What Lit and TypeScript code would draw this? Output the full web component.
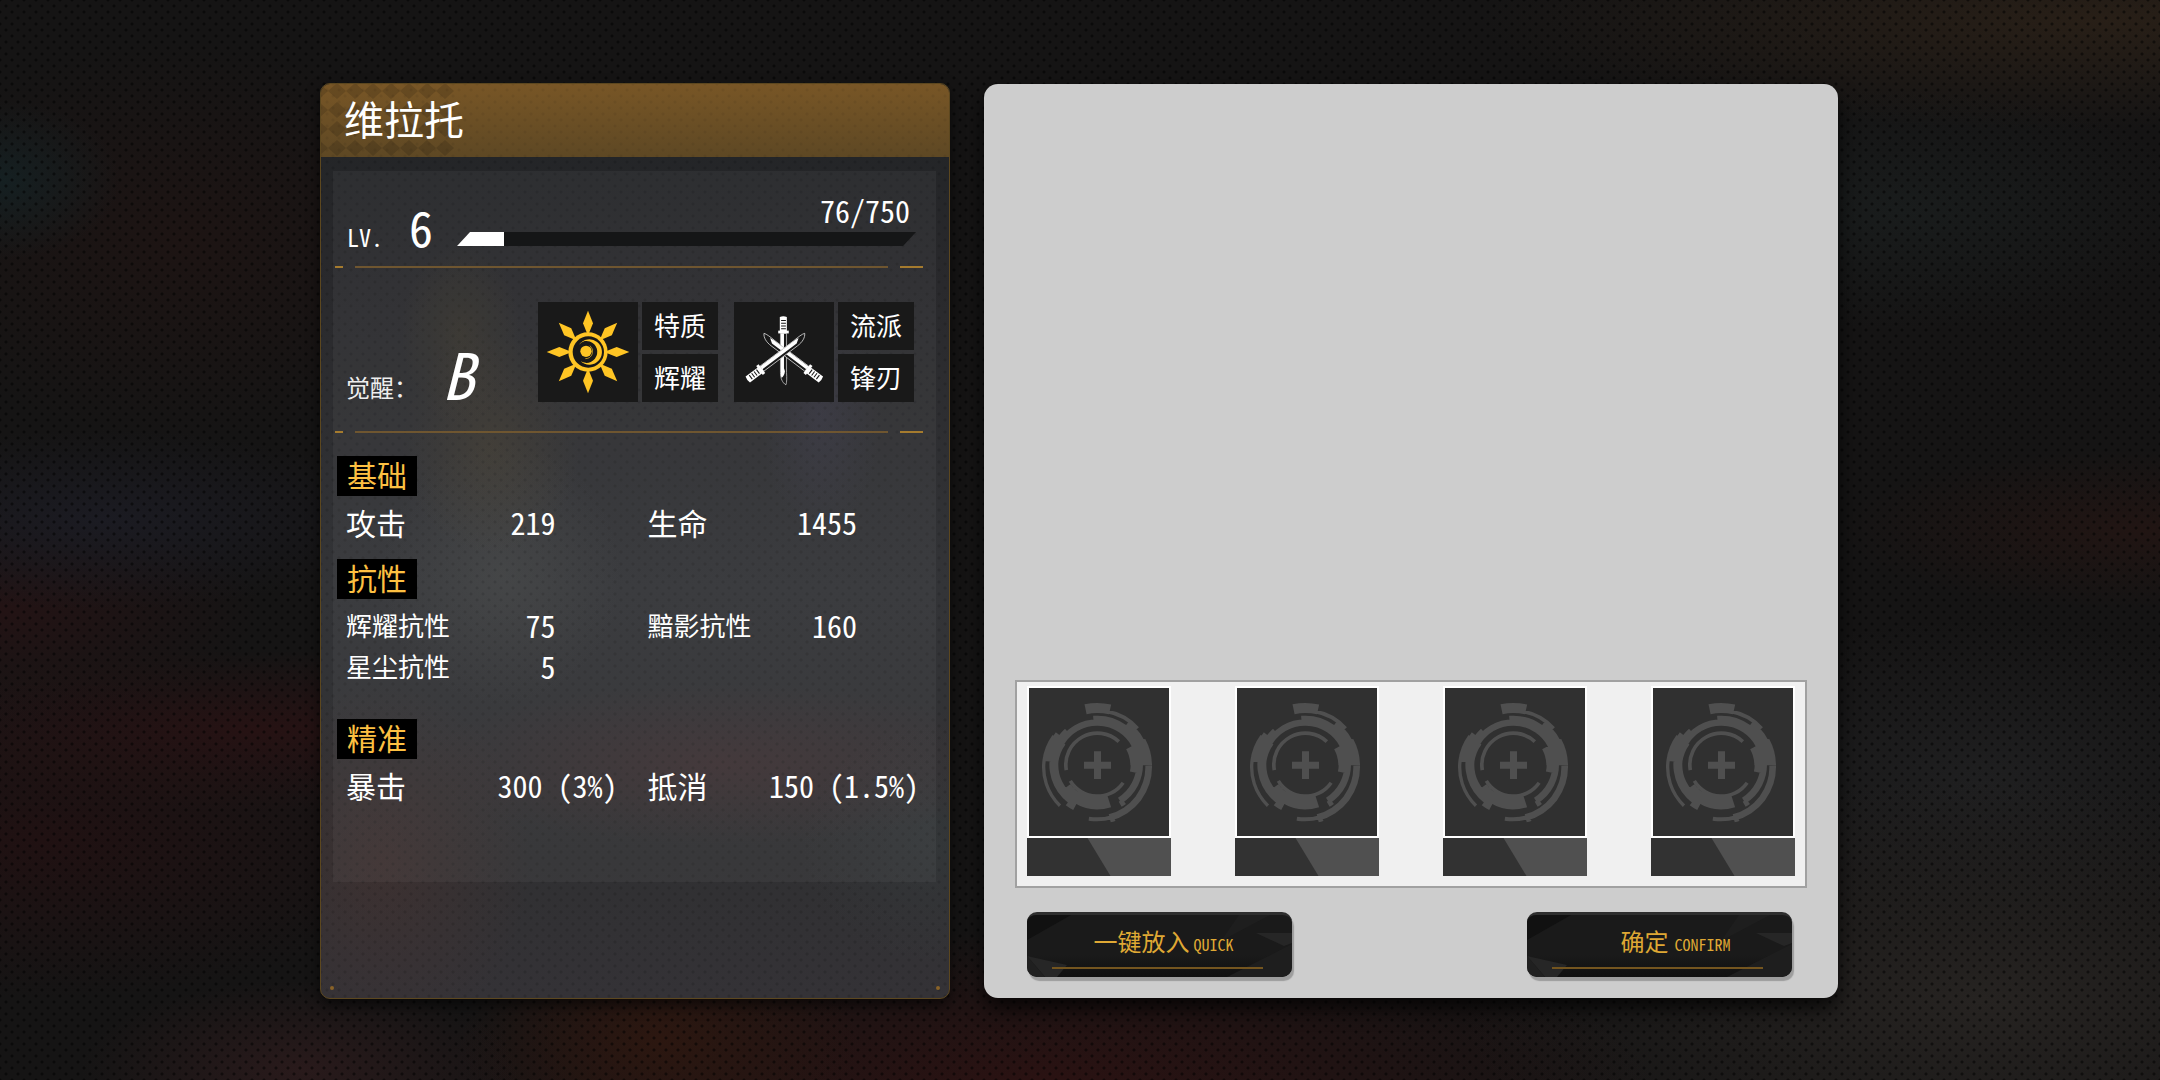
import { LitElement, html, svg, css } from "lit";
import { customElement, property, state } from "lit/decorators.js";

interface Stat {
  label: string;
  value: string;
}

interface StatGroup {
  title: string;
  kind: "base" | "resist" | "precision";
  stats: Stat[];
}

const GROUPS: StatGroup[] = [
  {
    title: "基础",
    kind: "base",
    stats: [
      { label: "攻击", value: "219" },
      { label: "生命", value: "1455" },
    ],
  },
  {
    title: "抗性",
    kind: "resist",
    stats: [
      { label: "辉耀抗性", value: "75" },
      { label: "黯影抗性", value: "160" },
      { label: "星尘抗性", value: "5" },
    ],
  },
  {
    title: "精准",
    kind: "precision",
    stats: [
      { label: "暴击", value: "300 (3%)" },
      { label: "抵消", value: "150 (1.5%)" },
    ],
  },
];

/** Ring segment between two radii; angles run clockwise from twelve o'clock. */
function ring(cx: number, cy: number, r1: number, r2: number, a1: number, a2: number): string {
  const pt = (r: number, a: number) => {
    const t = (a * Math.PI) / 180;
    return `${(cx + r * Math.sin(t)).toFixed(1)} ${(cy - r * Math.cos(t)).toFixed(1)}`;
  };
  const large = a2 - a1 > 180 ? 1 : 0;
  return `M${pt(r2, a1)}A${r2} ${r2} 0 ${large} 1 ${pt(r2, a2)}L${pt(r1, a2)}A${r1} ${r1} 0 ${large} 0 ${pt(r1, a1)}Z`;
}

const EMBLEM = [
  ring(232, 254, 155, 185, -12, 13),
  ring(232, 254, 157, 168, 10, 48),
  ring(232, 254, 117, 147, -5, 36),
  ring(232, 254, 117, 136, -62, 64),
  ring(232, 254, 117, 165, 36, 47),
  ring(232, 254, 117, 159, 46, 64),
  ring(231, 256, 100, 165, 61, 90),
  ring(232, 254, 100, 136, 84, 102),
  ring(232, 254, 117, 137, 86, 148),
  ring(232, 254, 128, 146, 144, 150),
  ring(231, 262, 145, 165, 88, 166),
  ring(231, 262, 154, 170, 161, 166),
  ring(231, 262, 150, 162, 163, 189),
  ring(232, 254, 117, 158, -76, -52),
  ring(232, 254, 117, 145, -54, -42),
  ring(231, 262, 117, 165, -83, -54),
  ring(232, 254, 117, 144, -152, -80),
  ring(231, 262, 155, 165, -136, -80),
  ring(232, 254, 100, 154, -152, -142),
  ring(232, 254, 100, 144, -152, -126),
  ring(232, 254, 99, 134, 162, 212),
  ring(232, 254, 89, 100, 125, 239),
  ring(232, 254, 89, 100, -100, 43),
].join("");

const emblem = html`
  <svg class="emblem" viewBox="27 24 420 444" aria-hidden="true">
    <path fill="#4f4f4f" d=${EMBLEM}></path>
    <path fill="#4f4f4f" d="M192 245h30v-31h21v31h30v21h-30v31h-21v-31h-30z"></path>
  </svg>
`;

const sun = html`
  <svg class="glyph" viewBox="-6 6 300 300" aria-hidden="true">
    <g fill="#ffc524">
      ${[0, 45, 90, 135, 180, 225, 270, 315].map(
        (a) => svg`<path d="M144 32L159 70L146 102H142L129 70Z" transform="rotate(${a} 144 156)"></path>`
      )}
      <circle cx="144" cy="156" r="59"></circle>
    </g>
    <circle cx="145" cy="156" r="47" fill="#191919"></circle>
    <path fill="#ffc524" d="M117 134A38 38 0 1 1 122 184A33 33 0 1 0 134 123A36 36 0 0 0 117 134Z"></path>
    <circle cx="138" cy="154" r="17" fill="#ffc524"></circle>
    <path fill="none" stroke="#ffc524" stroke-width="2" d="M150 137A22 22 0 0 1 136 176"></path>
  </svg>
`;

/** Sword with the grip on top; `face` is the lit side of the blade. */
const sword = (face: string) => svg`
  <path d="M-9 3V158C-9 180 -3 198 8 206C11 196 11 180 10 158V3Z"
    fill="#191919" stroke="#d8d8d8" stroke-width="2.5" stroke-linejoin="round"></path>
  <path d=${face} fill="#fff"></path>
  <path d="M-16 -8H17V3H-16Z" fill="#fff"></path>
  <path d="M-11 -62Q0 -67 11 -62V-6H-11Z" fill="#fff"></path>
  <path d="M-7 -48H8M-7 -37H8M-7 -26H8M-7 -15H8" stroke="#191919" stroke-width="4"></path>
`;

const SPINE_LEFT = "M-8 3H2V140L5 152C4 166 0 172 -5 178C-8 172 -8 166 -8 158Z";
const SPINE_RIGHT = "M-2 3H9V160C9 168 9 174 8 178L-2 160Z";

const swords = html`
  <svg class="glyph" viewBox="-3 6 300 300" aria-hidden="true">
    <g transform="translate(145 98) scale(.96 .76)">${sword(SPINE_LEFT)}</g>
    <g transform="translate(217 208) scale(-1 1) rotate(-127) scale(1 .82)">${sword(SPINE_RIGHT)}</g>
    <g transform="translate(79 208) rotate(-127) scale(1 .82)">${sword(SPINE_RIGHT)}</g>
  </svg>
`;

const base = css`
  *,
  *::before,
  *::after {
    box-sizing: border-box;
  }
  :host {
    font-family: "Noto Sans Mono CJK SC", "Noto Sans CJK SC", sans-serif;
  }
`;

@customElement("command-button")
export class CommandButton extends LitElement {
  @property() label = "";
  @property() caption = "";
  @property({ type: Boolean, reflect: true }) spaced = false;

  static styles = [
    base,
    css`
      :host {
        display: block;
        flex: 0 1 265px;
      }
      .command {
        position: relative;
        display: flex;
        align-items: baseline;
        justify-content: center;
        gap: 4px;
        width: 100%;
        height: 65px;
        padding: 10px 0 0 8px;
        overflow: hidden;
        border: 0;
        border-top: 3px solid #2e2e2e;
        border-radius: 10px;
        background: linear-gradient(#1a1a1a 64%, #101010);
        color: #dfa834;
        font: inherit;
        font-size: 24px;
        line-height: 32px;
        cursor: pointer;
      }
      :host([spaced]) .command {
        gap: 6px;
        padding-left: 32px;
      }
      .shade {
        border-radius: 10px;
        box-shadow: 2px 4px 1px #9d9d9d;
      }
      .facets {
        position: absolute;
        inset: 0;
        width: 100%;
        height: 100%;
      }
      .command::after {
        content: "";
        position: absolute;
        left: 25px;
        right: 29px;
        bottom: 8px;
        height: 2px;
        background: #74551f;
      }
      .text,
      .caption {
        position: relative;
      }
      .caption {
        font-size: 16px;
      }
    `,
  ];

  render() {
    return html`
      <div class="shade">
        <button class="command" type="button">
          <svg class="facets" viewBox="0 0 265 62" preserveAspectRatio="none" aria-hidden="true">
            <path fill="#111" d="M0 0H44L0 25Z"></path>
            <path fill="#1e1e1e" d="M212 0H243L194 26ZM265 29V62H200Z"></path>
            <path fill="#262626" d="M229 18H265V28L257 31ZM0 41L40 50L30 62H18Z"></path>
            <path fill="#202020" d="M0 41L18 62H0Z"></path>
          </svg>
          <span class="text">${this.label}</span>
          <span class="caption">${this.caption}</span>
        </button>
      </div>
    `;
  }
}

@customElement("stat-group")
export class StatGroupView extends LitElement {
  @property({ attribute: false }) group!: StatGroup;

  static styles = [
    base,
    css`
      :host {
        display: block;
      }
      .title {
        display: block;
        width: max-content;
        margin: 0 0 0 4px;
        padding: 0 10px 4px;
        background: #000;
        color: #fdc042;
        font-size: 30px;
        font-weight: 400;
        line-height: 36px;
      }
      .stats {
        display: grid;
        grid-template-columns: 1fr 1fr;
        margin: 8px 0 0;
      }
      .stat {
        display: flex;
        align-items: center;
        justify-content: space-between;
        height: 41px;
        padding: 0 79px 6px 13px;
        white-space: nowrap;
      }
      .precision .stat {
        padding-right: 17px;
      }
      .name,
      .value {
        margin: 0;
        font-size: 30px;
        line-height: 34px;
      }
      .resist .name {
        font-size: 26px;
      }
    `,
  ];

  render() {
    const { title, kind, stats } = this.group;
    return html`
      <section class=${kind}>
        <h2 class="title">${title}</h2>
        <dl class="stats">
          ${stats.map(
            (s) => html`
              <div class="stat">
                <dt class="name">${s.label}</dt>
                <dd class="value">${s.value}</dd>
              </div>
            `
          )}
        </dl>
      </section>
    `;
  }
}

@customElement("app-root")
export class AppRoot extends LitElement {
  @state() private exp = 76;
  @state() private expMax = 750;

  static styles = [
    base,
    css`
      :host {
        display: block;
        color: #fff;
      }
      .page {
        position: relative;
        display: flex;
        justify-content: center;
        min-height: 100vh;
        padding: 83px 34px 81px 32px;
        background:
          radial-gradient(circle, rgba(0, 0, 0, 0.5) 1px, transparent 2px) 0 0 / 12px 12px,
          radial-gradient(circle, rgba(0, 0, 0, 0.5) 1px, transparent 2px) 6px 6px / 12px 12px,
          radial-gradient(ellipse 70px 50px at 1220px 140px, #352117, transparent),
          radial-gradient(ellipse 620px 110px at 2100px 20px, #281f17, transparent),
          radial-gradient(ellipse 120px 80px at 0 180px, #152022, transparent),
          radial-gradient(ellipse 300px 90px at 100px 520px, #1b1b22, transparent),
          radial-gradient(ellipse 260px 110px at 0 610px, #231314, transparent),
          radial-gradient(ellipse 420px 80px at 260px 730px, #261213, transparent),
          radial-gradient(ellipse 400px 160px at 40px 840px, #201112, transparent),
          radial-gradient(ellipse 220px 90px at 300px 1070px, #291a1b, transparent),
          radial-gradient(ellipse 200px 120px at 660px 1040px, #2c1710, transparent),
          radial-gradient(ellipse 620px 150px at 1040px 1080px, #2a1212, transparent),
          radial-gradient(ellipse 520px 220px at 1980px 1000px, #262321, transparent),
          radial-gradient(ellipse 340px 160px at 1980px 780px, #1f1f20, transparent),
          radial-gradient(ellipse 300px 120px at 1900px 210px, #191c1c, transparent),
          radial-gradient(ellipse 300px 80px at 2140px 530px, #211513, transparent),
          radial-gradient(ellipse 300px 200px at 180px 240px, #1d1413, transparent),
          #151414;
      }
      .layout {
        display: grid;
        grid-template-columns: minmax(0, 630fr) minmax(0, 854fr);
        gap: 34px;
        width: 100%;
        max-width: 1518px;
      }

      .profile {
        position: relative;
        display: flex;
        flex-direction: column;
        overflow: hidden;
        border: 1px solid #5c471f;
        border-radius: 10px;
        background:
          radial-gradient(circle, rgba(0, 0, 0, 0.13) 1px, transparent 2px) 0 0 / 12px 12px,
          radial-gradient(circle, rgba(0, 0, 0, 0.13) 1px, transparent 2px) 6px 6px / 12px 12px,
          radial-gradient(ellipse 60px 90px at 140px 250px, rgba(80, 70, 40, 0.28), transparent),
          radial-gradient(ellipse 90px 110px at 170px 360px, rgba(85, 72, 45, 0.3), transparent),
          radial-gradient(ellipse 60px 120px at 500px 330px, rgba(62, 60, 78, 0.4), transparent),
          radial-gradient(ellipse 120px 130px at 180px 490px, rgba(78, 80, 78, 0.36), transparent),
          radial-gradient(ellipse 300px 80px at 400px 680px, rgba(80, 50, 52, 0.36), transparent),
          radial-gradient(ellipse 150px 180px at 60px 780px, rgba(80, 50, 46, 0.38), transparent),
          radial-gradient(ellipse 140px 120px at 620px 760px, rgba(54, 60, 62, 0.5), transparent),
          linear-gradient(#212325, #29292c 22%, #333437 55%, #303032 85%, #343236);
        box-shadow: 0 6px 14px rgba(0, 0, 0, 0.6);
      }
      .head {
        position: relative;
        display: flex;
        align-items: center;
        height: 73px;
        padding: 0 23px 6px;
        background:
          radial-gradient(circle, rgba(0, 0, 0, 0.06) 1px, transparent 2px) 0 0 / 12px 12px,
          radial-gradient(circle, rgba(0, 0, 0, 0.06) 1px, transparent 2px) 6px 6px / 12px 12px,
          linear-gradient(#785626, #5e4824);
      }
      .diamonds {
        position: absolute;
        left: 0;
        top: 0;
        width: 136px;
        height: 100%;
      }
      .hero {
        position: relative;
        margin: 0;
        font-size: 40px;
        font-weight: 400;
        line-height: 56px;
      }
      .sheet {
        display: flex;
        flex-direction: column;
        min-height: 711px;
        margin: 14px 13px 0 12px;
        padding-bottom: 40px;
        background: rgba(255, 255, 255, 0.045);
      }

      .level {
        display: flex;
        align-items: flex-end;
        height: 80px;
        padding: 0 20px 0 14px;
      }
      .lv {
        width: 62px;
        font-size: 24px;
        line-height: 28px;
      }
      .rank {
        width: 48px;
        font-size: 48px;
        line-height: 50px;
      }
      .gauge {
        flex: 1;
        display: flex;
        flex-direction: column;
        padding-bottom: 5px;
      }
      .exp {
        padding-right: 6px;
        font-size: 30px;
        line-height: 44px;
        text-align: right;
      }
      .track {
        height: 14px;
        background: #151617;
        clip-path: polygon(13px 0, 100% 0, calc(100% - 13px) 100%, 0 100%);
      }
      .fill {
        height: 100%;
        background: #fff;
      }

      .rule {
        display: grid;
        grid-template-columns: 8px 1fr 23px;
        gap: 12px;
        height: 2px;
        margin: 0 13px 0 2px;
      }
      .rule span {
        background: #a57b2e;
      }
      .rule .long {
        background: #6f5630;
      }
      .rule.first {
        margin-top: 15px;
      }

      .traits {
        display: flex;
        align-items: flex-end;
        height: 163px;
        padding: 0 22px 29px 13px;
      }
      .awaken {
        flex: 1;
        display: flex;
        align-items: flex-end;
        gap: 24px;
      }
      .tag {
        font-size: 24px;
        line-height: 30px;
        color: #eee;
      }
      .grade {
        font-size: 64px;
        font-style: italic;
        line-height: 60px;
      }
      .cards {
        display: flex;
        gap: 16px;
      }
      .trait {
        display: grid;
        grid-template-columns: 100px 76px;
        grid-template-rows: 48px 48px;
        gap: 4px;
      }
      .icon {
        grid-row: span 2;
        background: #191919;
      }
      .glyph {
        display: block;
        width: 100px;
        height: 100px;
      }
      .word {
        background: #191919;
        font-size: 26px;
        line-height: 46px;
        text-align: center;
      }

      .groups {
        display: flex;
        flex-direction: column;
        gap: 14px;
        margin-top: 23px;
      }
      .groups .wide {
        margin-bottom: 16px;
      }
      .rivets {
        display: flex;
        justify-content: space-between;
        margin-top: auto;
        padding: 0 9px 8px;
      }
      .rivets span {
        width: 4px;
        height: 4px;
        border-radius: 50%;
        background: #8a6328;
      }

      .bench {
        display: flex;
        flex-direction: column;
        justify-content: flex-end;
        margin: 1px 0;
        padding: 0 31px 21px;
        border-radius: 14px;
        background: #cdcdcd;
        box-shadow: 0 10px 20px rgba(0, 0, 0, 0.75);
      }
      .tray {
        display: flex;
        justify-content: space-between;
        padding: 4px 10px 10px;
        border: 2px solid #a1a1a1;
        background: #f0f0f0;
      }
      .slot {
        display: block;
        width: 144px;
        padding: 0;
        border: 0;
        background: none;
        cursor: pointer;
      }
      .cell {
        display: block;
        height: 152px;
        border: 2px solid #fff;
        background: #303030;
      }
      .emblem {
        display: block;
        width: 100%;
        height: 100%;
      }
      .plate {
        display: block;
        height: 38px;
        background: #323232;
      }
      .plate::after {
        content: "";
        display: block;
        height: 100%;
        background: #505050;
        clip-path: polygon(42% 0, 100% 0, 100% 100%, 58% 100%);
      }
      .actions {
        display: flex;
        justify-content: space-between;
        gap: 24px;
        margin-top: 24px;
        padding: 0 15px 0 12px;
      }
    `,
  ];

  private renderDiamonds() {
    const cells = [];
    for (let row = 0; row < 4; row++) {
      for (let col = 0; col < 8; col++) {
        const x = -2 + col * 18;
        const y = 7 + row * 19;
        cells.push(svg`<path d="M${x} ${y - 8}L${x + 9} ${y}L${x} ${y + 8}L${x - 9} ${y}Z"></path>`);
      }
    }
    return html`<svg class="diamonds" viewBox="0 0 136 73" fill="#000" fill-opacity=".13" aria-hidden="true">${cells}</svg>`;
  }

  private renderTrait(icon: unknown, kind: string, name: string) {
    return html`
      <div class="trait">
        <div class="icon">${icon}</div>
        <div class="word">${kind}</div>
        <div class="word">${name}</div>
      </div>
    `;
  }

  render() {
    const pct = (this.exp / this.expMax) * 100;
    return html`
      <main class="page">
        <div class="layout">
          <article class="profile">
            <header class="head">
              ${this.renderDiamonds()}
              <h1 class="hero">维拉托</h1>
            </header>
            <div class="sheet">
              <div class="level">
                <span class="lv">LV.</span>
                <span class="rank">6</span>
                <div class="gauge">
                  <span class="exp">${this.exp}/${this.expMax}</span>
                  <div class="track" role="progressbar" aria-valuenow=${this.exp} aria-valuemax=${this.expMax}>
                    <div class="fill" style="width:${pct}%"></div>
                  </div>
                </div>
              </div>
              <div class="rule first"><span></span><span class="long"></span><span></span></div>
              <div class="traits">
                <div class="awaken">
                  <span class="tag">觉醒：</span>
                  <span class="grade">B</span>
                </div>
                <div class="cards">
                  ${this.renderTrait(sun, "特质", "辉耀")}
                  ${this.renderTrait(swords, "流派", "锋刃")}
                </div>
              </div>
              <div class="rule"><span></span><span class="long"></span><span></span></div>
              <div class="groups">
                ${GROUPS.map(
                  (g) => html`<stat-group class=${g.kind === "resist" ? "wide" : ""} .group=${g}></stat-group>`
                )}
              </div>
            </div>
            <div class="rivets"><span></span><span></span></div>
          </article>
          <section class="bench">
            <div class="tray">
              ${[1, 2, 3, 4].map(
                (n) => html`
                  <button class="slot" type="button" aria-label=${n}>
                    <span class="cell">${emblem}</span>
                    <span class="plate"></span>
                  </button>
                `
              )}
            </div>
            <div class="actions">
              <command-button label="一键放入" caption="QUICK"></command-button>
              <command-button label="确定" caption="CONFIRM" spaced></command-button>
            </div>
          </section>
        </div>
      </main>
    `;
  }
}
